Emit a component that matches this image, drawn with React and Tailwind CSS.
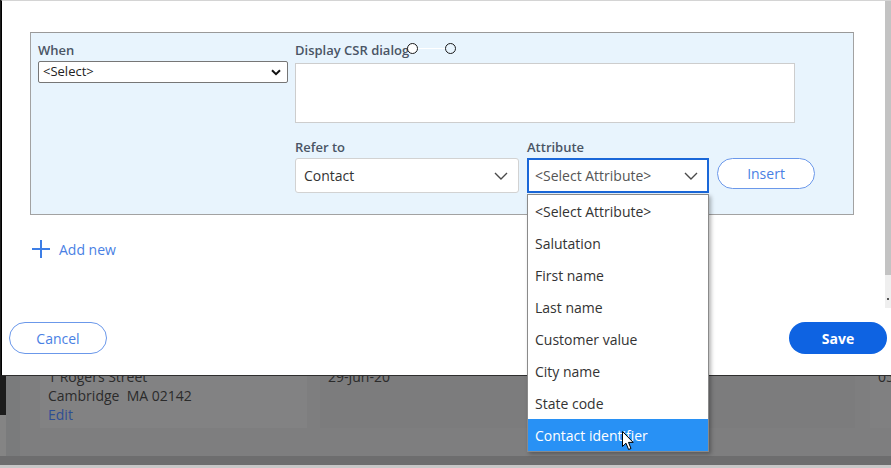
import React from "react";

const font = { fontFamily: '"Open Sans", "Noto Sans", sans-serif' };

function Chevron({ className = "" }) {
  return (
    <svg width="14" height="8" viewBox="0 0 14 8" className={className}>
      <path d="M1 1 L7 7 L13 1" fill="none" stroke="#4a4a4a" strokeWidth="1.4" />
    </svg>
  );
}

function Cursor() {
  return (
    <svg width="13" height="20" viewBox="0 0 13 20" className="absolute left-[94px] top-[12px]">
      <path
        d="M0.5 0.5 L0.5 15.5 L4 12.2 L6.6 18.5 L9 17.5 L6.5 11.4 L11.2 11.4 Z"
        fill="#ffffff"
        stroke="#000000"
        strokeWidth="1"
        strokeLinejoin="round"
      />
    </svg>
  );
}

const items = [
  "<Select Attribute>",
  "Salutation",
  "First name",
  "Last name",
  "Customer value",
  "City name",
  "State code",
  "Contact identifier",
];

export default function App() {
  return (
    <div className="relative w-[891px] h-[468px] overflow-hidden bg-[#797a7c]" style={font}>
      {/* background page, dimmed */}
      <div className="flex flex-col h-full">
        <div className="flex flex-1">
          <div className="w-[6px] shrink-0 flex flex-col">
            <div className="h-[415px] bg-[#1c1c1c]" />
            <div className="flex-1 bg-[#848484]" />
          </div>
          <div className="w-[14px] shrink-0 bg-[#7a7b7c]" />
          <div className="flex-1 min-w-0 bg-[#7e7e7f] flex items-end pl-[20px] pb-[28px]">
            <div className="w-[267px] shrink-0 h-[128px] bg-[#828283] flex flex-col justify-end px-[8px] pb-[4px] text-[14px] leading-[19px] text-[#2b2b2b]">
              <div>1 Rogers Street</div>
              <div>Cambridge&nbsp;&nbsp;MA 02142</div>
              <div className="text-[#2f4e94]">Edit</div>
            </div>
            <div className="ml-[13px] w-[535px] shrink-0 h-[128px] bg-[#7c7c7d] flex flex-col justify-end px-[8px] pb-[42px] text-[14px] leading-[19px] text-[#2b2b2b]">
              <div>29-Jun-20</div>
            </div>
            <div className="ml-[15px] flex-1 min-w-0 h-[128px] bg-[#808081] flex flex-col justify-end px-[8px] pb-[42px] text-[14px] leading-[19px] text-[#2b2b2b] overflow-hidden">
              <div>05</div>
            </div>
          </div>
        </div>
        <div className="h-[9px] bg-[#6d6d6e]" />
        <div className="h-[3px] bg-[#c7c7c7]" />
      </div>

      {/* modal */}
      <div className="absolute left-[1px] top-0 w-[890px] h-[376px] bg-white border-l border-l-black border-t border-t-[#d4d4d4] border-b border-b-[#2e2e2e] flex flex-col">
        <div className="flex h-[307px]">
          <div className="flex-1 pl-[28px] pt-[31px]">
            {/* blue panel */}
            <div className="w-[824px] h-[183px] bg-[#e8f4fd] border border-[#a2a2a2] border-t-[#999999] pt-[9px] px-[7px] flex gap-[7px]">
              <div className="w-[250px] flex flex-col">
                <div className="text-[13px] leading-[16px] font-semibold text-[#4a5565]">When</div>
                <div className="mt-[3px] h-[22px] bg-white border border-[#767676] rounded-[2px] flex items-center justify-between pl-[4px] pr-[6px]">
                  <span className="text-[13px] text-[#222]">&lt;Select&gt;</span>
                  <svg width="10" height="7" viewBox="0 0 10 7">
                    <path d="M1 1.2 L5 5.2 L9 1.2" fill="none" stroke="#111" strokeWidth="2" />
                  </svg>
                </div>
              </div>
              <div className="flex flex-col">
                <div className="relative text-[13px] leading-[16px] font-semibold text-[#4a5565]">
                  Display CSR dialog
                  <div className="absolute left-[112px] top-[1px] w-[11px] h-[11px] rounded-full border border-[#1a1a1a] bg-white" />
                  <div className="absolute left-[123px] top-[6px] w-[27px] h-[1px] bg-white" />
                  <div className="absolute left-[150px] top-[1px] w-[11px] h-[11px] rounded-full border border-[#1a1a1a] bg-transparent" />
                </div>
                <div className="mt-[5px] w-[500px] h-[60px] bg-white border border-[#cdcdcd]" />
                <div className="flex mt-[16px] gap-[8px]">
                  <div className="flex flex-col">
                    <div className="text-[13px] leading-[16px] font-semibold text-[#4a5565]">Refer to</div>
                    <div className="mt-[3px] w-[224px] h-[35px] bg-white border border-[#d2d2d2] rounded-[3px] flex items-center justify-between pl-[8px] pr-[10px]">
                      <span className="text-[14px] text-[#333]">Contact</span>
                      <Chevron />
                    </div>
                  </div>
                  <div className="flex flex-col">
                    <div className="text-[13px] leading-[16px] font-semibold text-[#4a5565]">Attribute</div>
                    <div className="relative mt-[3px] w-[182px] h-[35px] bg-white border-2 border-[#1a67d8] flex items-center justify-between pl-[6px] pr-[9px]">
                      <span className="text-[14px] text-[#555]">&lt;Select Attribute&gt;</span>
                      <Chevron />
                      {/* dropdown list */}
                      <div className="absolute left-[-2px] top-[34px] w-[182px] bg-white border border-[#8a8a8a] shadow-[2px_2px_4px_rgba(0,0,0,0.3)] z-10">
                        {items.map((t, i) => (
                          <div
                            key={t}
                            className={
                              i === items.length - 1
                                ? "relative h-[32px] flex items-center pl-[7px] text-[14px] bg-[#2891f5] text-white"
                                : "h-[32px] flex items-center pl-[7px] text-[14px] text-[#333]"
                            }
                          >
                            {t}
                            {i === items.length - 1 && <Cursor />}
                          </div>
                        ))}
                      </div>
                    </div>
                  </div>
                  <div className="flex flex-col justify-end">
                    <button className="w-[98px] h-[31px] rounded-full border-[1.5px] border-[#6b98ea] text-[14px] text-[#4a7fe4] bg-white mb-[4px]">
                      Insert
                    </button>
                  </div>
                </div>
              </div>
            </div>
            {/* add new */}
            <div className="mt-[25px] ml-[2px] flex items-center gap-[9px] h-[18px]">
              <svg width="18" height="18" viewBox="0 0 18 18">
                <path d="M9 0 V18 M0 9 H18" stroke="#3d7ee6" strokeWidth="2" />
              </svg>
              <span className="text-[14px] text-[#4a7fe4]">Add new</span>
            </div>
          </div>
          <div className="w-[6px] flex flex-col">
            <div className="h-[274px] bg-[#c3c3c3]" />
            <div className="flex-1 bg-[#efefef] flex items-end justify-center pb-[8px]">
              <div className="w-[2px] h-[2px] bg-[#555]" />
            </div>
          </div>
        </div>
        <div className="flex-1 flex justify-between items-start pt-[14px] pl-[7px] pr-[4px]">
          <button className="w-[98px] h-[32px] rounded-full border-[1.5px] border-[#6b98ea] text-[14px] text-[#4a7fe4] bg-white">
            Cancel
          </button>
          <button className="w-[98px] h-[32px] rounded-full bg-[#0e63e2] text-[14px] font-bold text-white">
            Save
          </button>
        </div>
      </div>
    </div>
  );
}
